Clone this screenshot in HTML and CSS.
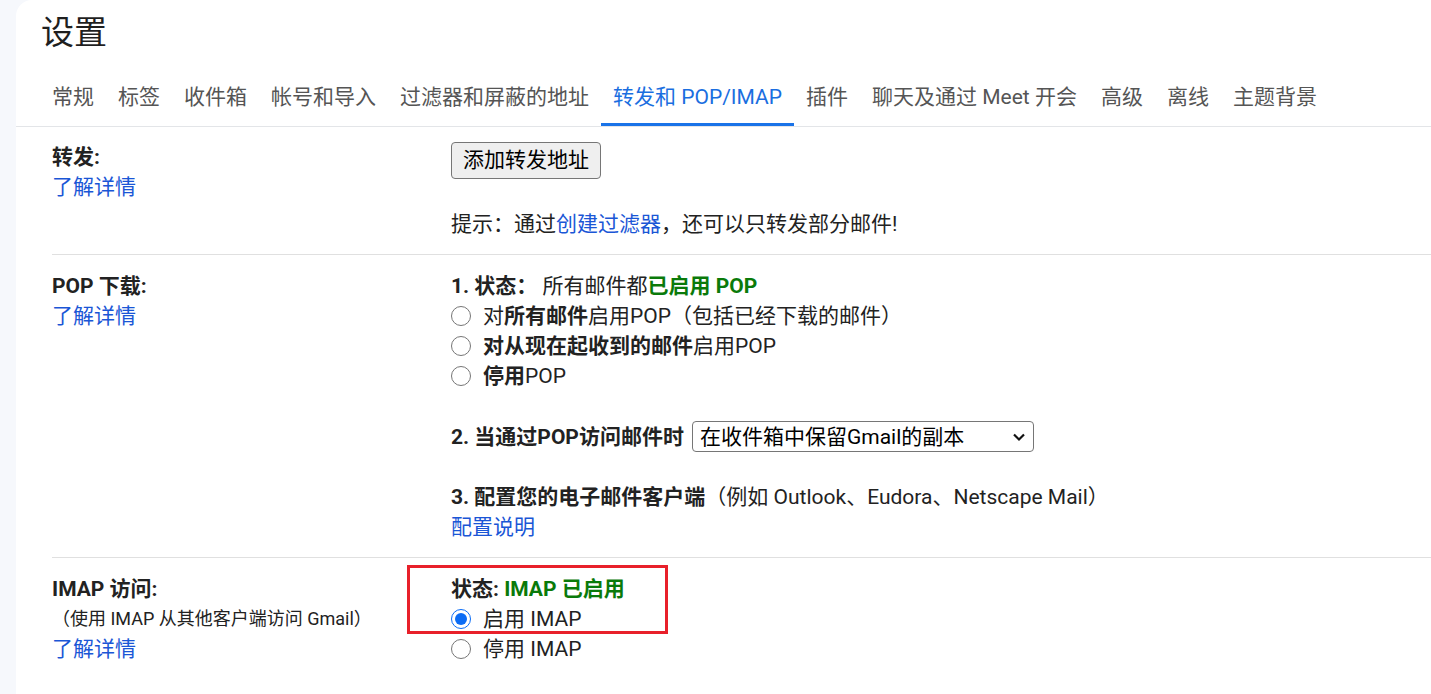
FILE: index.html
```html
<!DOCTYPE html>
<html lang="zh-CN">
<head>
<meta charset="utf-8">
<title>设置</title>
<link rel="stylesheet" href="styles.css">
</head>
<body>
<div class="page">
  <div class="card">
    <h1 class="title">设置</h1>
    <nav class="tabs">
      <a class="tab">常规</a>
      <a class="tab">标签</a>
      <a class="tab">收件箱</a>
      <a class="tab">帐号和导入</a>
      <a class="tab">过滤器和屏蔽的地址</a>
      <a class="tab active">转发和 POP/IMAP</a>
      <a class="tab">插件</a>
      <a class="tab">聊天及通过 Meet 开会</a>
      <a class="tab">高级</a>
      <a class="tab">离线</a>
      <a class="tab">主题背景</a>
    </nav>

    <div class="settings">
      <section class="row first">
        <div class="label">
          <div class="label-title">转发:</div>
          <a class="link">了解详情</a>
        </div>
        <div class="value">
          <button class="btn" type="button">添加转发地址</button>
          <p class="hint">提示：通过<a class="link">创建过滤器</a>，还可以只转发部分邮件!</p>
        </div>
      </section>

      <section class="row pop">
        <div class="label">
          <div class="label-title">POP 下载:</div>
          <a class="link">了解详情</a>
        </div>
        <div class="value">
          <div class="line"><b>1. 状态：</b> 所有邮件都<b class="ok">已启用 POP</b></div>
          <label class="radio-row"><input type="radio" name="pop"><span>对<b>所有邮件</b>启用POP（包括已经下载的邮件）</span></label>
          <label class="radio-row"><input type="radio" name="pop"><span><b>对从现在起收到的邮件</b>启用POP</span></label>
          <label class="radio-row"><input type="radio" name="pop"><span><b>停用</b>POP</span></label>
          <div class="line blank"></div>
          <div class="line select-line">
            <b>2. 当通过POP访问邮件时</b>
            <span class="select-wrap">
              <span class="select">在收件箱中保留Gmail的副本</span>
              <svg class="chev" width="14" height="10" viewBox="0 0 14 10"><path d="M2 2.5 L7 7.5 L12 2.5" fill="none" stroke="#111" stroke-width="2.2"/></svg>
            </span>
          </div>
          <div class="line blank"></div>
          <div class="line"><b>3. 配置您的电子邮件客户端</b>（例如 Outlook、Eudora、Netscape Mail）</div>
          <div class="line"><a class="link">配置说明</a></div>
        </div>
      </section>

      <section class="row imap">
        <div class="label">
          <div class="label-title">IMAP 访问:</div>
          <div class="sub">（使用 IMAP 从其他客户端访问 Gmail）</div>
          <a class="link">了解详情</a>
        </div>
        <div class="value">
          <div class="line"><b>状态: </b><b class="ok">IMAP 已启用</b></div>
          <label class="radio-row"><input type="radio" name="imap" checked><span>启用 IMAP</span></label>
          <label class="radio-row"><input type="radio" name="imap"><span>停用 IMAP</span></label>
        </div>
        <div class="highlight"></div>
      </section>
    </div>
  </div>
</div>
</body>
</html>
```

FILE: styles.css
```css
* { box-sizing: border-box; }

html, body {
  margin: 0;
  padding: 0;
  height: 100%;
  overflow: hidden;
}

body {
  background: #f6f8fc;
  font-family: Roboto, "Noto Sans CJK SC", sans-serif;
  color: #222222;
}

.page {
  height: 100%;
  padding-left: 16px;
}

.card {
  background: #ffffff;
  border-top-left-radius: 16px;
  height: 100%;
}

.title {
  margin: 0;
  padding: 13px 0 0 25px;
  height: 66px;
  font-size: 33px;
  line-height: 40px;
  font-weight: 400;
  color: #1f1f1f;
}

.tabs {
  display: flex;
  padding-left: 24px;
  border-bottom: 1px solid #e3e5e8;
}

.tab {
  display: block;
  padding: 16px 12px 11px;
  font-size: 21px;
  line-height: 30px;
  color: #555555;
  border-bottom: 3px solid transparent;
  white-space: nowrap;
}

.tab.active {
  color: #1a6ee0;
  border-bottom-color: #1a73e8;
}

.settings {
  margin-left: 36px;
  font-size: 21px;
  line-height: 30px;
}

.row {
  position: relative;
  display: grid;
  grid-template-columns: 399px 1fr;
  padding: 15px 0;
  border-top: 1px solid #e0e0e0;
}

.row.first {
  border-top: none;
}

.row.pop {
  padding-top: 16px;
}

.row.imap {
  padding-top: 16px;
}

.label-title {
  font-weight: 700;
}

.link {
  color: #1a56d6;
  text-decoration: none;
}

.label .link {
  display: block;
}

.sub {
  font-size: 18px;
}

b {
  font-weight: 700;
}

.ok {
  color: #0a7a0a;
}

.btn {
  display: block;
  height: 37px;
  padding: 0 11px;
  font-family: inherit;
  font-size: 21px;
  line-height: 35px;
  color: #000000;
  background: #efefef;
  border: 1px solid #767676;
  border-radius: 4px;
}

.hint {
  margin: 30px 0 0;
}

.line {
  height: 30px;
  white-space: nowrap;
}

.radio-row {
  display: flex;
  align-items: center;
  height: 30px;
  gap: 12px;
  white-space: nowrap;
}

.radio-row input {
  width: 20px;
  height: 20px;
  margin: 0;
  accent-color: #0b6cf5;
}

.line.select-line {
  display: flex;
  align-items: center;
  gap: 8px;
  height: 31px;
}

.select-wrap {
  position: relative;
  display: inline-flex;
  align-items: center;
  width: 342px;
  height: 31px;
  border: 1px solid #767676;
  border-radius: 4px;
  background: #ffffff;
  padding-left: 7px;
  font-size: 21px;
  color: #000000;
}

.chev {
  position: absolute;
  right: 7px;
  top: 10px;
}

.highlight {
  position: absolute;
  left: 355px;
  top: 7px;
  width: 261px;
  height: 69px;
  border: 3px solid #e8202a;
  pointer-events: none;
}
```
